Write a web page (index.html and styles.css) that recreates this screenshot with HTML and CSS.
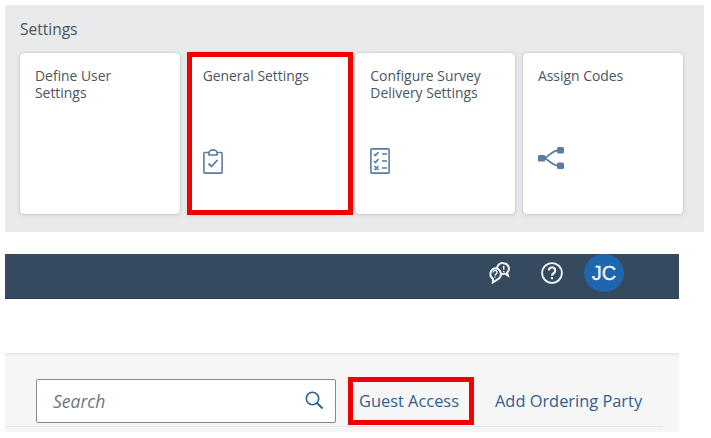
FILE: index.html
```html
<!DOCTYPE html>
<html lang="en">
<head>
<meta charset="utf-8">
<title>Settings</title>
<link rel="stylesheet" href="styles.css">
</head>
<body>
<section class="panel">
  <h2 class="panel-title">Settings</h2>
  <div class="cards">
    <article class="card"><h3 class="card-title">Define User<br>Settings</h3></article>
    <article class="card card-marked">
      <h3 class="card-title">General Settings</h3>
      <svg class="card-icon" width="20" height="25" viewBox="0 0 20 25" fill="none" stroke="#5b7ba3" stroke-width="1.600">
        <path d="M6 3.500H1.800a.9.9 0 0 0-.9.9v18.800a.9.9 0 0 0 .9.9h16.400a.9.9 0 0 0 .9-.9V4.400a.9.9 0 0 0-.9-.9H14"/>
        <path d="M6 6V3.600C6 2 8 .9 10 .9s4 1.100 4 2.700V6z"/>
        <path d="M5.500 14.500l3 3 6-6.500" stroke-width="1.800"/>
      </svg>
    </article>
    <article class="card">
      <h3 class="card-title">Configure Survey<br>Delivery Settings</h3>
      <svg class="card-icon" width="20" height="26" viewBox="0 0 20 26" fill="none" stroke="#5b7ba3" stroke-width="1.600">
        <rect x=".9" y=".9" width="18.200" height="24.200" rx=".8"/>
        <path d="M4 6l1.500 1.500 3-3.500M12 6h5M4 13l1.500 1.500 3-3.500M12 13h5M4.500 18l4 4M8.500 18l-4 4M12 20h5"/>
      </svg>
    </article>
    <article class="card">
      <h3 class="card-title">Assign Codes</h3>
      <svg class="card-icon card-icon-share" width="26" height="22" viewBox="0 0 26 22" fill="#5b7ba3" stroke="none">
        <rect x="0" y="8" width="7" height="6.500" rx="1"/>
        <rect x="19" y="0" width="7" height="6.500" rx="1.500"/>
        <rect x="19" y="15.500" width="7" height="6.500" rx="1.500"/>
        <path d="M6 11C11 10 13 4 20 3.300M6 11.500C11 12 13 18 20 18.700" fill="none" stroke="#5b7ba3" stroke-width="1.800"/>
      </svg>
    </article>
  </div>
</section>

<header class="shellbar">
  <svg class="shell-icon" width="22" height="22" viewBox="0 0 22 22" fill="#354a5f" stroke="#eef2f5" stroke-width="2">
    <path d="M15.500 1.200a5.400 5.400 0 0 1 3.700 9.300l.8 3.200-3.500-2.200A5.400 5.400 0 1 1 15.500 1.200z"/>
    <path d="M7 6.200a5.900 5.900 0 0 1 2.500 11.200L4.800 20.500l.3-3.600A5.900 5.900 0 0 1 7 6.200z"/>
    <path d="M5 10.400a2 2 0 1 1 3 1.700c-.7.400-1 .8-1 1.500M7 14.600v1M15.700 3.800v4M15.700 9v.9" fill="none" stroke-width="1.500"/>
  </svg>
  <svg class="shell-icon help" width="22" height="22" viewBox="0 0 22 22" fill="none" stroke="#eef2f5" stroke-width="1.800">
    <circle cx="11" cy="11" r="9.900"/>
    <path d="M7.800 8.500a3.200 3.200 0 1 1 4.800 2.800c-1 .6-1.600 1.200-1.600 2.400" stroke-width="2.200"/>
    <path d="M11 15v2.200" stroke-width="2.200"/>
  </svg>
  <div class="avatar">JC</div>
</header>

<div class="toolbar">
  <div class="toolbar-row">
    <div class="search">
      <span class="search-text">Search</span>
      <svg width="19" height="19" viewBox="0 0 19 19" fill="none" stroke="#2a6296" stroke-width="1.600">
        <circle cx="7.500" cy="7.500" r="6.200"/>
        <path d="M12 12l5.500 5.500" stroke-width="2"/>
      </svg>
    </div>
    <a class="link link-marked">Guest Access</a>
    <a class="link">Add Ordering Party</a>
  </div>
</div>
</body>
</html>
```

FILE: styles.css
```css
* { box-sizing: border-box; }

html, body { background: #fff; }

body {
  margin: 0;
  padding: 5px 7px 0 5px;
  width: 711px;
  height: 438px;
  overflow: hidden;
  font-family: "Open Sans", "Noto Sans", sans-serif;
  color: #4a5561;
}

.panel {
  height: 227px;
  padding: 14px 21px 18px 15px;
  background: #e8eaec;
}

.panel-title {
  margin: 0 0 14px;
  font-size: 15.500px;
  line-height: 20px;
  font-weight: 400;
}

.cards {
  display: grid;
  grid-template-columns: repeat(4, 160px);
  column-gap: 7.670px;
  height: 161px;
}

.card {
  display: flex;
  flex-direction: column;
  justify-content: space-between;
  padding: 14px 15px 40px;
  background: #fff;
  border-radius: 4px;
  box-shadow: 0 0 2px rgba(50, 60, 70, .35), 0 2px 6px rgba(50, 60, 70, .08);
}

.card-marked {
  outline: 5px solid #f00000;
  outline-offset: -4px;
  border-radius: 0;
  width: 164px;
  position: relative;
  z-index: 1;
}

.card-title {
  margin: 0;
  font-size: 13.900px;
  line-height: 17px;
  font-weight: 400;
}

.card-icon { display: block; }
.card-icon-share { margin-bottom: 5px; }

.shellbar {
  display: flex;
  align-items: center;
  margin-top: 22px;
  width: 674px;
  height: 45px;
  padding: 0 55px 6px 0;
  justify-content: flex-end;
  background: #354a5f;
  border-bottom: 1px solid #2b3c4d;
}

.shell-icon { flex: none; }
.help { margin-left: 31px; }

.avatar {
  display: flex;
  align-items: center;
  justify-content: center;
  width: 40px;
  height: 38px;
  margin-left: 21px;
  align-self: flex-start;
  border-radius: 50%;
  background: #1f66ae;
  color: #f2f6fa;
  font-family: "Liberation Sans", sans-serif;
  font-size: 20px;
  -webkit-text-stroke: .3px #f2f6fa;
}

.toolbar {
  margin-top: 54px;
  width: 674px;
  height: 79px;
  background: linear-gradient(#e2e3e4, #f6f6f6 3px);
}

.toolbar-row {
  display: flex;
  align-items: center;
  width: 658px;
  height: 74px;
  padding: 22px 0 0 31px;
  border-bottom: 1px solid #e4e5e6;
}

.search {
  display: flex;
  align-items: center;
  justify-content: space-between;
  flex: none;
  width: 300px;
  height: 44px;
  padding: 0 11px 0 16px;
  background: #fff;
  border: 1px solid #87898b;
  border-radius: 2px;
}

.search-text {
  font-size: 17.500px;
  font-style: italic;
  color: #70757a;
}

.link {
  font-size: 16.400px;
  color: #2f6095;
  white-space: nowrap;
}

.link-marked {
  display: flex;
  align-items: center;
  height: 48px;
  margin-left: 12px;
  padding: 0 10px 0 6px;
  border: 5px solid #f00000;
}

.link + .link { margin-left: 21px; }
```
